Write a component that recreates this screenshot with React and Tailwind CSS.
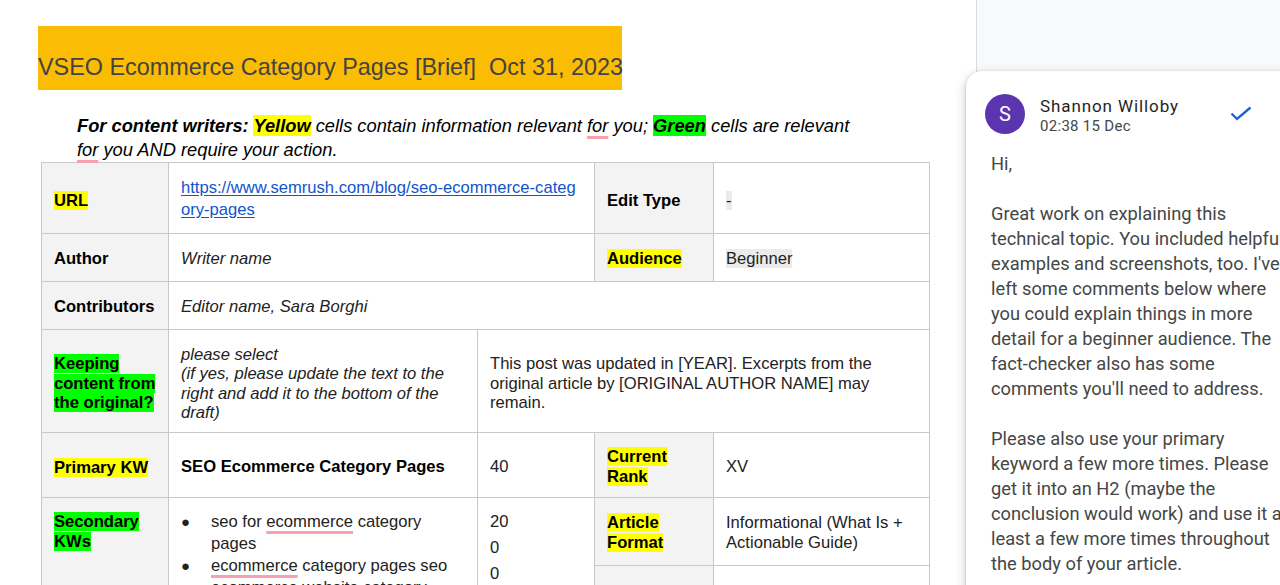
import React from "react";

const cell = "border border-[#c8c8c8] pl-[12px] pr-[13px] pt-[3px] align-middle";
const labelCell = cell + " bg-[#f3f3f3] font-bold text-black";
const firstLabel = labelCell + " !pr-[6px]";
const valueCell = cell + " text-[#222]";

function Hl({ color, children }) {
  return <span className={color}>{children}</span>;
}

function Squiggle({ children }) {
  return (
    <span className="underline decoration-[#f7a0b0] decoration-[3px] underline-offset-[4px] [text-decoration-skip-ink:none]">
      {children}
    </span>
  );
}

function Bullet() {
  return <span className="w-[30px] shrink-0 text-[15px] leading-[22px]">●</span>;
}

function BriefTable() {
  const yellow = "bg-[#ffff00]";
  const green = "bg-[#00ff00]";
  return (
    <table className="ml-[41px] w-[888px] table-fixed border-collapse text-[16.6px] leading-[19.5px]">
      <colgroup>
        <col className="w-[127px]" />
        <col className="w-[309px]" />
        <col className="w-[117px]" />
        <col className="w-[119px]" />
        <col className="w-[216px]" />
      </colgroup>
      <tbody>
        <tr className="h-[71px]">
          <td className={firstLabel + " !pt-[5px]"}>
            <Hl color={yellow}>URL</Hl>
          </td>
          <td colSpan={2} className={valueCell + " !pt-[1px]"}>
            <span className="block leading-[22px] text-[#1155cc] underline underline-offset-[2px]">
              https://www.semrush.com/blog/seo-ecommerce-categ
              <br />
              ory-pages
            </span>
          </td>
          <td className={labelCell + " !pt-[5px]"}>Edit Type</td>
          <td className={valueCell + " !pt-[5px]"}>
            <span className="bg-[#ebebeb]">-</span>
          </td>
        </tr>
        <tr className="h-[48px]">
          <td className={firstLabel}>Author</td>
          <td colSpan={2} className={valueCell + " italic"}>
            Writer name
          </td>
          <td className={labelCell}>
            <Hl color={yellow}>Audience</Hl>
          </td>
          <td className={valueCell}>
            <span className="bg-[#ebebeb]">Beginner</span>
          </td>
        </tr>
        <tr className="h-[48px]">
          <td className={firstLabel}>Contributors</td>
          <td colSpan={4} className={valueCell + " italic"}>
            Editor name, Sara Borghi
          </td>
        </tr>
        <tr className="h-[103px]">
          <td className={firstLabel + " !pt-[5px]"}>
            <Hl color={green}>Keeping content from the original?</Hl>
          </td>
          <td className={valueCell + " italic !pt-[5px]"}>
            please select
            <br />
            (if yes, please update the text to the right and add it to the bottom of the draft)
          </td>
          <td colSpan={3} className={valueCell + " !pt-[5px]"}>
            This post was updated in [YEAR]. Excerpts from the original article by [ORIGINAL AUTHOR NAME] may remain.
          </td>
        </tr>
        <tr className="h-[65px]">
          <td className={firstLabel + " !pt-[5px]"}>
            <Hl color={yellow}>Primary KW</Hl>
          </td>
          <td className={valueCell + " font-bold text-black"}>SEO Ecommerce Category Pages</td>
          <td className={valueCell}>40</td>
          <td className={labelCell}>
            <Hl color={yellow}>Current Rank</Hl>
          </td>
          <td className={valueCell}>XV</td>
        </tr>
        <tr className="h-[68px]">
          <td rowSpan={2} className={firstLabel + " !align-top !pt-[14px]"}>
            <Hl color={green}>Secondary KWs</Hl>
          </td>
          <td rowSpan={2} className={valueCell + " !align-top !pt-[13px]"}>
            <ul className="leading-[22px]">
              <li className="flex">
                <Bullet />
                <span>
                  seo for <Squiggle>ecommerce</Squiggle> category pages
                </span>
              </li>
              <li className="flex">
                <Bullet />
                <span>
                  <Squiggle>ecommerce</Squiggle> category pages seo <Squiggle>ecommerce</Squiggle> website category
                  pages
                </span>
              </li>
            </ul>
          </td>
          <td rowSpan={2} className={valueCell + " !align-top !pt-[11px] leading-[26px]"}>
            20
            <br />0
            <br />0
            <br />0
          </td>
          <td className={labelCell + " !pt-[2px]"}>
            <Hl color={yellow}>Article Format</Hl>
          </td>
          <td className={valueCell + " !pt-[2px]"}>Informational (What Is + Actionable Guide)</td>
        </tr>
        <tr className="h-[70px]">
          <td className={labelCell}></td>
          <td className={valueCell}></td>
        </tr>
      </tbody>
    </table>
  );
}

const commentLines = [
  "Hi,",
  "",
  "Great work on explaining this",
  "technical topic. You included helpful",
  "examples and screenshots, too. I've",
  "left some comments below where",
  "you could explain things in more",
  "detail for a beginner audience. The",
  "fact-checker also has some",
  "comments you'll need to address.",
  "",
  "Please also use your primary",
  "keyword a few more times. Please",
  "get it into an H2 (maybe the",
  "conclusion would work) and use it at",
  "least a few more times throughout",
  "the body of your article.",
];

function CommentCard() {
  return (
    <div className="absolute left-[-11px] top-[71px] w-[360px] rounded-tl-[16px] bg-white pl-[19px] pt-[23px] pb-[40px] shadow-[0_1px_3px_rgba(60,64,67,0.3),0_4px_8px_3px_rgba(60,64,67,0.15)] font-['Roboto','Noto_Sans',sans-serif]">
      <div className="flex items-start">
        <div className="flex h-[40px] w-[40px] shrink-0 items-center justify-center rounded-full bg-[#5b35b0] text-[20px] text-white">
          S
        </div>
        <div className="ml-[15px] flex flex-col">
          <span className="mt-[1px] text-[17px] leading-[22px] tracking-[0.9px] text-[#1f1f1f]">Shannon Willoby</span>
          <span className="text-[15px] leading-[19px] tracking-[0.3px] text-[#444746]">02:38 15 Dec</span>
        </div>
        <svg className="ml-[51px] mt-[12px]" width="22" height="16" viewBox="0 0 22 16" fill="none">
          <polyline points="1.5,7.5 7,13 20.5,1.5" stroke="#1a62d6" strokeWidth="2.3" />
        </svg>
      </div>
      <div className="mt-[15px] pl-[6px] text-[18.3px] leading-[25px] text-[#444746]">
        {commentLines.map((line, i) => (
          <div key={i} className="h-[25px] whitespace-nowrap">
            {line}
          </div>
        ))}
      </div>
    </div>
  );
}

export default function App() {
  return (
    <div className="flex h-[585px] w-[1280px] overflow-hidden bg-white font-['Liberation_Sans',Arial,sans-serif]">
      <div className="w-[976px] shrink-0 bg-white">
        <div className="ml-[38px] mt-[26px] h-[64px] w-[584px] bg-[#fbbc04] pt-[27px]">
          <div className="whitespace-nowrap text-[23.4px] leading-[28px] text-[#434343]">
            VSEO Ecommerce Category Pages [Brief]&nbsp; Oct 31, 2023
          </div>
        </div>
        <p className="ml-[77px] mt-[24px] text-[18.3px] italic leading-[24px] text-black">
          <b>For content writers: </b>
          <b className="bg-[#ffff00]">Yellow</b> cells contain information relevant <Squiggle>for</Squiggle> you;{" "}
          <b className="bg-[#00ff00]">Green</b> cells are relevant
          <br />
          <Squiggle>for</Squiggle> you AND require your action.
        </p>
        <BriefTable />
      </div>
      <div className="relative flex-1 border-l border-[#dadce0] bg-[#f8f9fa]">
        <CommentCard />
      </div>
    </div>
  );
}
